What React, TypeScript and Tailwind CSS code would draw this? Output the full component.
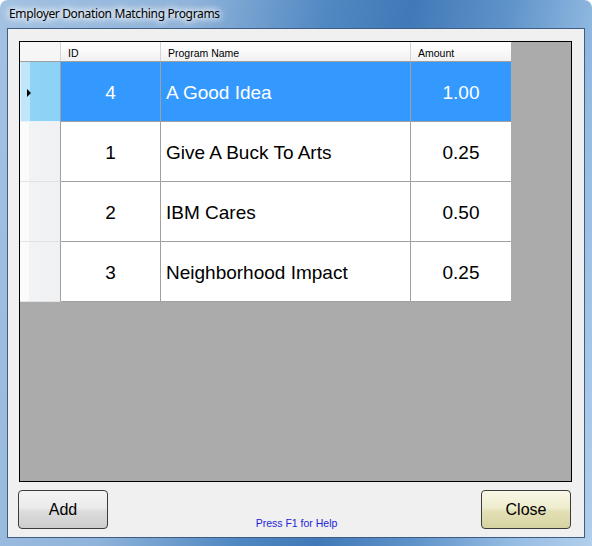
import React from "react";

const rows = [
  { id: "4", name: "A Good Idea", amount: "1.00", selected: true },
  { id: "1", name: "Give A Buck To Arts", amount: "0.25" },
  { id: "2", name: "IBM Cares", amount: "0.50" },
  { id: "3", name: "Neighborhood Impact", amount: "0.25" },
];

export default function App() {
  return (
    <div className="w-[592px] h-[546px] bg-white font-['Liberation_Sans',Arial,sans-serif]">
      <div className="w-full h-full rounded-t-[8px] flex flex-col px-[7px] pb-[8px] bg-[linear-gradient(100deg,#a3c2e2_0%,#8fb3da_28%,#5088c2_48%,#4179b8_60%,#5e93c9_74%,#94bbe2_88%,#b2cfeb_100%)]">
        <div className="h-[28px] flex items-center pl-[2px]">
          <span className="text-[12px] text-black font-['Noto_Sans','Liberation_Sans',sans-serif] [text-shadow:0_0_6px_#fff,0_0_8px_#fff,0_0_10px_#fff] leading-none tracking-[-0.35px]">
            Employer Donation Matching Programs
          </span>
        </div>
        <div className="flex-1 bg-[#f0f0f0] border border-[#3d5d82] flex flex-col pt-[12px]">
          {/* grid */}
          <div className="ml-[11px] w-[553px] h-[441px] border border-black bg-[#ababab] flex flex-col">
            {/* header */}
            <div className="flex h-[20px] w-[491px] border-b border-[#a0a0a0] bg-[linear-gradient(180deg,#ffffff_0%,#fafafa_50%,#f0f0f0_100%)] text-[10.5px] text-black leading-none">
              <div className="w-[41px] border-r border-[#d4d4d4] bg-[#f6f6f6]" />
              <div className="w-[100px] border-r border-[#d4d4d4] pl-[7px] flex items-end pb-[3px]">ID</div>
              <div className="w-[250px] border-r border-[#d4d4d4] pl-[7px] flex items-end pb-[3px]">Program Name</div>
              <div className="w-[100px] pl-[7px] flex items-end pb-[3px]">Amount</div>
            </div>
            {rows.map((r) => (
              <div key={r.id} className="flex h-[60px] w-[491px]">
                {r.selected ? (
                  <div className="w-[41px] border-r border-[#a0a0a0] flex">
                    <div className="w-[40px] h-full border-b border-[#5c9ac4] bg-[linear-gradient(90deg,#bfe6fa_0%,#bfe6fa_22%,#8fd4f6_22%,#8dd2f5_100%)] relative border-l border-[#e6f4fb]">
                      <div className="absolute left-[6px] top-[27px] w-0 h-0 border-y-[4px] border-y-transparent border-l-[4px] border-l-black" />
                    </div>
                  </div>
                ) : (
                  <div className="w-[41px] border-r border-[#a0a0a0] border-b border-b-[#e2e2e2] bg-[linear-gradient(90deg,#fbfbfb_0%,#fbfbfb_22%,#f2f3f5_22%,#eff1f3_100%)]" />
                )}
                <div
                  className={`flex flex-1 border-b border-[#a0a0a0] text-[19px] ${
                    r.selected ? "bg-[#3399ff] text-white" : "bg-white text-black"
                  }`}
                >
                  <div className="w-[100px] border-r border-[#a0a0a0] flex items-center justify-center pt-[3px]">
                    {r.id}
                  </div>
                  <div className="w-[250px] border-r border-[#a0a0a0] flex items-center pl-[5px] pt-[3px]">
                    {r.name}
                  </div>
                  <div className="w-[100px] flex items-center justify-center pt-[3px]">{r.amount}</div>
                </div>
              </div>
            ))}
          </div>
          {/* bottom */}
          <div className="ml-[10px] w-[553px] mt-[8px] h-[39px] flex items-stretch">
            <button className="w-[90px] h-[39px] rounded-[4px] border border-[#3c3c3c] bg-[linear-gradient(180deg,#f4f4f4_0%,#ebebeb_45%,#dcdcdc_55%,#cdcdcd_100%)] text-[16px] text-black pt-[1px]">
              Add
            </button>
            <div className="flex-1 flex items-end justify-center pb-[1px] pl-[4px]">
              <span className="text-[10.5px] text-[#2323d8] leading-none">Press F1 for Help</span>
            </div>
            <button className="w-[90px] h-[39px] rounded-[4px] border border-[#3c3c3c] bg-[linear-gradient(180deg,#f8f7e6_0%,#efedce_45%,#e3e0b6_55%,#d6d3a2_100%)] text-[16px] text-black pt-[1px]">
              Close
            </button>
          </div>
        </div>
      </div>
    </div>
  );
}
